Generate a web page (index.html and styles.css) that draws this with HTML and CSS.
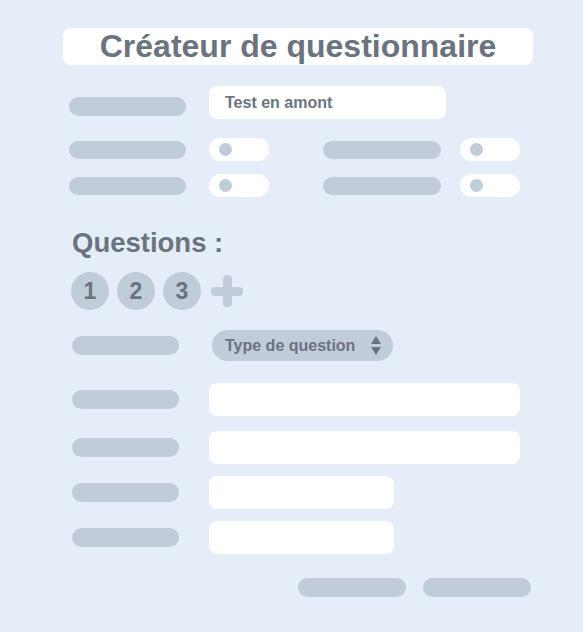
FILE: index.html
```html
<!DOCTYPE html>
<html>
<head>
  <meta charset="utf-8">
  <title>Créateur de questionnaire</title>
  <link rel="stylesheet" href="styles.css">
</head>
<body>
  <div class="page">
    <h1 class="title">Créateur de questionnaire</h1>

    <div class="row-name">
      <span class="bar"></span>
      <div class="field">Test en amont</div>
    </div>

    <div class="toggles">
      <span class="bar"></span>
      <span class="toggle"><i></i></span>
      <span class="bar"></span>
      <span class="toggle"><i></i></span>
      <span class="bar"></span>
      <span class="toggle"><i></i></span>
      <span class="bar"></span>
      <span class="toggle"><i></i></span>
    </div>

    <h2 class="heading">Questions :</h2>

    <div class="tabs">
      <span class="num">1</span>
      <span class="num">2</span>
      <span class="num">3</span>
      <span class="plus"></span>
    </div>

    <div class="qrow type-row">
      <span class="bar short"></span>
      <div class="select">
        Type de question
        <span class="arrows"><b class="up"></b><b class="down"></b></span>
      </div>
    </div>

    <div class="qrows">
      <div class="qrow">
        <span class="bar short"></span>
        <div class="field wide"></div>
      </div>
      <div class="qrow">
        <span class="bar short"></span>
        <div class="field wide"></div>
      </div>
      <div class="qrow">
        <span class="bar short"></span>
        <div class="field half"></div>
      </div>
      <div class="qrow">
        <span class="bar short"></span>
        <div class="field half"></div>
      </div>
    </div>

    <div class="actions">
      <span class="bar btn"></span>
      <span class="bar btn"></span>
    </div>
  </div>
</body>
</html>
```

FILE: styles.css
```css
* { box-sizing: border-box; }
body {
  margin: 0;
  background: #e5eef8;
  color: #6b7380;
  font-family: "Liberation Sans", Arial, sans-serif;
  font-weight: bold;
}
.page {
  width: 583px;
  height: 632px;
  padding: 28px 0 0 0;
}
.title {
  margin: 0 0 0 63px;
  width: 470px;
  height: 37px;
  background: #fff;
  border-radius: 8px;
  font-size: 32px;
  line-height: 37px;
  text-align: center;
}
.bar {
  display: block;
  background: #c1ccd9;
  border-radius: 10px;
  height: 19px;
}
.field {
  background: #fff;
  border-radius: 8px;
  height: 33px;
}
.row-name {
  display: flex;
  align-items: flex-start;
  gap: 23px;
  margin: 21px 0 0 69px;
}
.row-name .bar { width: 117px; margin-top: 11px; }
.row-name .field {
  width: 237px;
  padding-left: 16px;
  font-size: 16px;
  line-height: 33px;
}
.toggles {
  display: grid;
  grid-template-columns: 140px 114px 137px 60px;
  row-gap: 13px;
  align-items: center;
  margin: 19px 0 0 69px;
}
.toggles .bar { height: 18px; width: 117px; }
.toggles .bar:nth-child(3), .toggles .bar:nth-child(7) { width: 118px; }
.toggle {
  display: flex;
  align-items: center;
  width: 60px;
  height: 23px;
  background: #fff;
  border-radius: 12px;
  padding-left: 10px;
}
.toggle i {
  width: 13px;
  height: 13px;
  border-radius: 50%;
  background: #c1ccd9;
}
.heading {
  margin: 31px 0 0 72px;
  font-size: 27.5px;
  line-height: 30px;
}
.tabs {
  display: flex;
  align-items: center;
  gap: 8px;
  margin: 14px 0 0 71px;
}
.num {
  width: 38px;
  height: 38px;
  border-radius: 50%;
  background: #c1ccd9;
  font-size: 23px;
  line-height: 38px;
  text-align: center;
}
.plus {
  position: relative;
  width: 32px;
  height: 32px;
  margin-left: 2px;
}
.plus::before, .plus::after {
  content: "";
  position: absolute;
  background: #c1ccd9;
  border-radius: 4px;
}
.plus::before { left: 0; right: 0; top: 12px; height: 9px; }
.plus::after { top: 0; bottom: 0; left: 12px; width: 9px; }
.qrow {
  display: flex;
  align-items: center;
  gap: 30px;
  margin-left: 72px;
}
.bar.short { width: 107px; }
.type-row { margin-top: 20px; }
.select {
  display: flex;
  align-items: center;
  width: 181px;
  height: 31px;
  margin-left: 3px;
  padding-left: 13px;
  background: #c1ccd9;
  border-radius: 16px;
  font-size: 16px;
}
.arrows {
  display: flex;
  flex-direction: column;
  gap: 3px;
  margin-left: 16px;
}
.arrows b {
  width: 0;
  height: 0;
  border-left: 5px solid transparent;
  border-right: 5px solid transparent;
}
.arrows .up { border-bottom: 8px solid #6b7380; }
.arrows .down { border-top: 8px solid #6b7380; }
.qrows {
  display: flex;
  flex-direction: column;
  gap: 12px;
  margin-top: 22px;
}
.qrows .qrow:nth-child(2) { margin-top: 3px; }
.field.wide { width: 311px; }
.field.half { width: 185px; }
.actions {
  display: flex;
  gap: 17px;
  margin: 24px 0 0 298px;
}
.bar.btn { width: 108px; }
```
